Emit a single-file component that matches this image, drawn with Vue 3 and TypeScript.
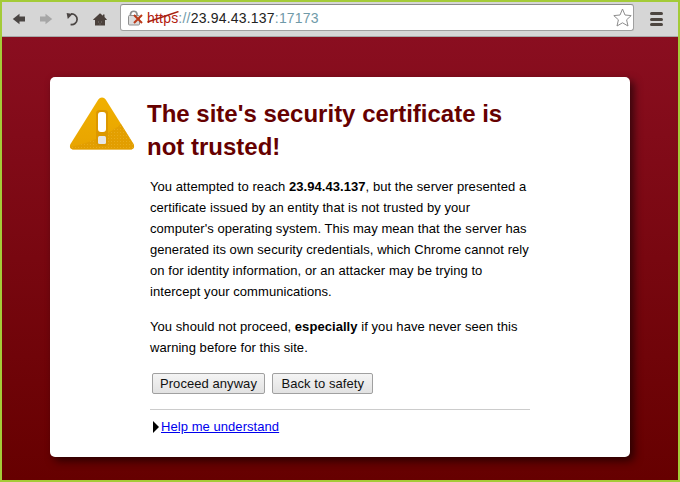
<template>
  <div class="frame">
    <div class="toolbar">
      <button class="nav" type="button" aria-label="Back">
        <svg width="14" height="12" viewBox="0 0 14 12"><path d="M0.8 6 L7.5 0.8 V3.6 H13 V8.4 H7.5 V11.2 Z" fill="#4a4543" /></svg>
      </button>
      <button class="nav" type="button" aria-label="Forward">
        <svg width="14" height="12" viewBox="0 0 14 12"><path d="M13.2 6 L6.5 0.8 V3.6 H1 V8.4 H6.5 V11.2 Z" fill="#a6a6a6" /></svg>
      </button>
      <button class="nav" type="button" aria-label="Reload">
        <svg width="14" height="14" viewBox="0 0 14 14"><path d="M5 2 A5.3 5.3 0 1 1 4.6 12.4" fill="none" stroke="#4a4543" stroke-width="1.7" /><path d="M0.6 1 L6.6 2 L1.8 7 Z" fill="#4a4543" /></svg>
      </button>
      <button class="nav" type="button" aria-label="Home">
        <svg width="14" height="13" viewBox="0 0 14 13"><path d="M7 0.2 L10 2.8 V1.6 H11.5 V4.1 L13.8 6.4 V7 H12 V12.6 H2 V7 H0.2 V6.4 Z" fill="#4a403b" /><path d="M5 8.5 h1 v1 h-1 z M8 8.5 h1 v1 h-1 z M6.5 10.5 h1 v1 h-1 z" fill="#7d7774" /></svg>
      </button>
      <div class="omnibox">
        <svg class="lock" width="18" height="18" viewBox="0 0 18 18">
          <path d="M3.5 7 V5 A3.3 3.3 0 0 1 10 5 V7" fill="none" stroke="#8f8f8f" stroke-width="1.7" />
          <rect x="1.5" y="6.5" width="11" height="9.5" rx="1" fill="#dcdcdc" stroke="#8f8f8f" />
          <path d="M7 6 L15 14 M15 6 L7 14" stroke="#bb3a18" stroke-width="2" />
        </svg>
        <span class="url"><span class="scheme">https<svg class="strike" width="32" height="12" viewBox="0 0 32 12"><path d="M0.5 11 L31.5 0.5" stroke="#a8200f" stroke-width="1.4" /></svg></span><span class="sep">://</span><span class="host">23.94.43.137</span><span class="port">:17173</span></span>
        <svg class="star" width="19" height="19" viewBox="0 0 19 19"><path d="M9.5 1 L12 7 L18.2 7.6 L13.6 11.8 L15 18 L9.5 14.8 L4 18 L5.4 11.8 L0.8 7.6 L7 7 Z" fill="#fff" stroke="#8d8d8d" /></svg>
      </div>
      <button class="menu" type="button" aria-label="Menu">
        <i></i><i></i><i></i>
      </button>
    </div>
    <main class="page">
      <section class="card">
        <div class="head">
          <svg class="warn" width="66" height="54" viewBox="0 0 66 54">
            <defs>
              <linearGradient id="warnFill" x1="0" y1="0" x2="0" y2="1">
                <stop offset="0" stop-color="#f0b000" />
                <stop offset="1" stop-color="#e8a400" />
              </linearGradient>
              <pattern id="warnDots" width="3" height="3" patternUnits="userSpaceOnUse">
                <rect width="1" height="1" fill="#f3c040" />
              </pattern>
            </defs>
            <path d="M33 1.5 C35 1.5 36 2.5 37 4 L64.5 48 C66 51 64.5 53.5 61.5 53.5 H4.5 C1.5 53.5 0 51 1.5 48 L29 4 C30 2.5 31 1.5 33 1.5 Z" fill="url(#warnFill)" />
            <path d="M64.5 48 C66 51 64.5 53.5 61.5 53.5 H4.5 C2.5 53.5 1.5 52.5 1 51 C22 47 40 38 52 28 Z" fill="#dd9a00" opacity="0.6" />
            <path d="M64.5 48 C66 51 64.5 53.5 61.5 53.5 H4.5 C2.5 53.5 1.5 52.5 1 51 C22 47 40 38 52 28 Z" fill="url(#warnDots)" opacity="0.4" />
            <rect x="27" y="14" width="12" height="36" rx="3.5" fill="#dc9800" />
            <rect x="29" y="16" width="8" height="20" rx="3" fill="#fff" />
            <rect x="29" y="40" width="8" height="8" rx="1.5" fill="#e6e6e6" />
          </svg>
          <h1>The site's security certificate is not trusted!</h1>
        </div>
        <div class="body">
          <p>You attempted to reach <b>23.94.43.137</b>, but the server presented a certificate issued by an entity that is not trusted by your computer's operating system. This may mean that the server has generated its own security credentials, which Chrome cannot rely on for identity information, or an attacker may be trying to intercept your communications.</p>
          <p>You should not proceed, <b>especially</b> if you have never seen this warning before for this site.</p>
          <div class="actions">
            <button class="btn" type="button">Proceed anyway</button>
            <button class="btn" type="button">Back to safety</button>
          </div>
          <hr />
          <div class="more">
            <span class="arrow"></span>
            <a href="#" @click.prevent>Help me understand</a>
          </div>
        </div>
      </section>
    </main>
  </div>
</template>
<script setup lang="ts">
</script>
<style>
html, body {
  margin: 0;
  background: #a4cb38;
}
</style>
<style scoped>
.frame {
  width: 676px;
  height: 478px;
  padding: 2px;
  background: #a4cb38;
  display: flex;
  flex-direction: column;
  font-family: "Liberation Sans", Arial, sans-serif;
}
.toolbar {
  height: 35px;
  flex: none;
  display: flex;
  align-items: center;
  background: #d6d6d6;
  border-bottom: 1px solid #a8a8a8;
  padding: 0 0 0 3.5px;
  box-sizing: border-box;
}
.nav {
  width: 27px;
  height: 24px;
  padding: 0;
  border: 0;
  background: none;
  display: flex;
  align-items: center;
  justify-content: center;
}
.omnibox {
  width: 514px;
  height: 27px;
  margin: -3px 0 0 6.5px;
  box-sizing: border-box;
  background: #fff;
  border: 1px solid #a0a0a0;
  border-top-color: #8c8c8c;
  border-radius: 3px;
  display: flex;
  align-items: center;
  padding: 0 1px 0 6px;
}
.lock {
  flex: none;
}
.url {
  margin-left: 2px;
  font-size: 14px;
  letter-spacing: 0.2px;
  white-space: nowrap;
}
.scheme {
  position: relative;
  color: #b3200f;
}
.strike {
  position: absolute;
  left: 0;
  top: 1px;
}
.sep, .port {
  color: #6f9aa8;
}
.host {
  color: #222;
}
.star {
  margin-left: auto;
}
.menu {
  margin-left: 16px;
  width: 13px;
  padding: 0;
  border: 0;
  background: none;
  display: flex;
  flex-direction: column;
  gap: 2.5px;
}
.menu i {
  display: block;
  height: 3px;
  border-radius: 1.5px;
  background: #4d4640;
}
.page {
  flex: 1;
  display: flex;
  justify-content: center;
  align-items: flex-start;
  padding-top: 40px;
  background: linear-gradient(#8a0e20, #660000);
}
.card {
  width: 580px;
  height: 380px;
  box-sizing: border-box;
  background: #fff;
  border-radius: 5px;
  box-shadow: 4px 4px 8px rgba(0, 0, 0, 0.6);
  padding: 20px 100px 0 19px;
}
.head {
  display: flex;
  align-items: flex-start;
}
.warn {
  flex: none;
  margin-top: -1px;
}
h1 {
  margin: 0 0 0 12px;
  width: 400px;
  color: #660000;
  font-size: 24px;
  font-weight: bold;
  line-height: 33px;
}
.body {
  margin-left: 81px;
  margin-top: 13px;
  width: 380px;
  font-size: 13px;
  letter-spacing: 0.06px;
  line-height: 21px;
  color: #000;
}
p {
  margin: 0 -4px 14px 0;
}
.actions {
  display: flex;
  gap: 7.5px;
  margin: 15px 0 0 2px;
}
.btn {
  height: 21px;
  padding: 0 7px;
  box-sizing: border-box;
  border: 1px solid #a0a0a0;
  border-radius: 2px;
  background: linear-gradient(#f4f4f4, #e2e2e2);
  font: 13px "Liberation Sans", Arial, sans-serif;
  letter-spacing: 0.06px;
  color: #111;
}
.btn + .btn {
  padding: 0 8px;
}
hr {
  margin: 15px 0 0;
  border: 0;
  border-top: 1px solid #ccc;
}
.more {
  margin-top: 6px;
  display: flex;
  align-items: center;
}
.arrow {
  width: 0;
  height: 0;
  margin: 0 2px 0 3px;
  border-left: 6px solid #000;
  border-top: 6px solid transparent;
  border-bottom: 6px solid transparent;
}
a {
  color: #0000ee;
  text-decoration: underline;
}
</style>
